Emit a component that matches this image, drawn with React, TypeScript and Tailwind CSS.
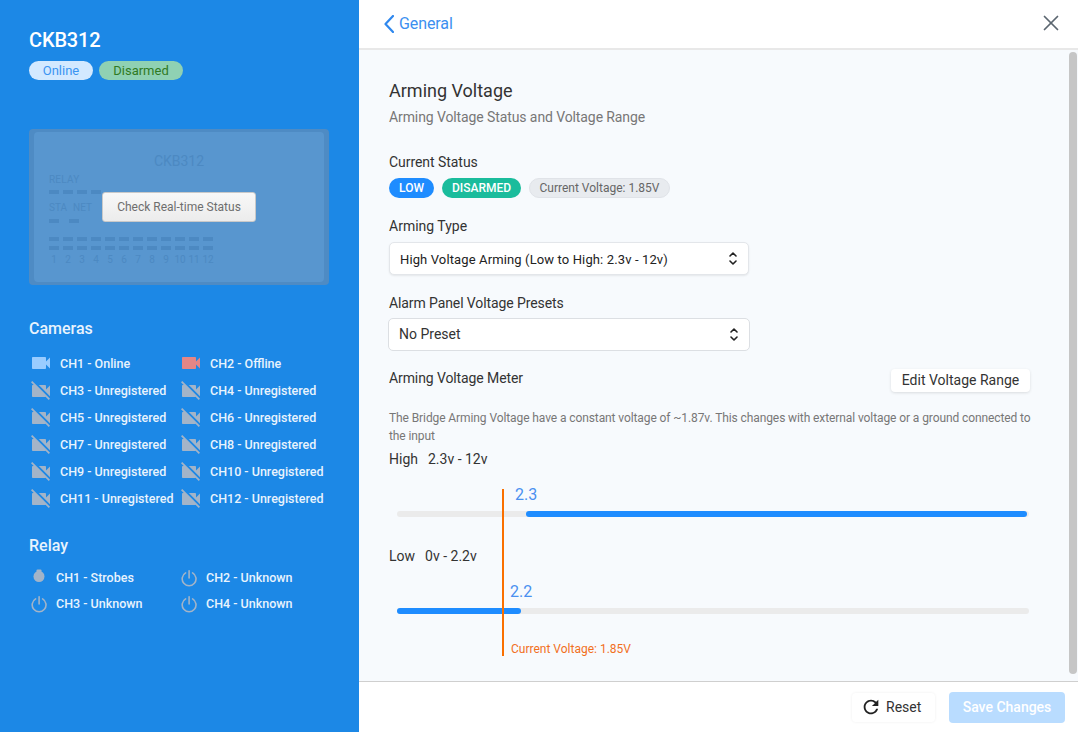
import React from "react";
import { MdRefresh, MdVideocam, MdVideocamOff } from "react-icons/md";
import { X } from "lucide-react";

function CamIcon({ state }: { state: "on" | "off" | "none" }) {
  if (state === "on") return <MdVideocam size={24} color="#99ccff" className="shrink-0 -mt-[3px]" />;
  if (state === "off") return <MdVideocam size={24} color="#e58686" className="shrink-0 -mt-[3px]" />;
  return <MdVideocamOff size={24} color="#a3b4c8" className="shrink-0 -mt-[2px]" />;
}

function PowerIcon() {
  return (
    <svg width="18" height="18" viewBox="0 0 18 18" fill="none" stroke="#a3b4c8" strokeWidth="1.6" strokeLinecap="round" className="shrink-0">
      <path d="M6.6 3.9 A6.9 6.9 0 1 0 13.6 3.9" />
      <path d="M10.1 1.8 V9" />
    </svg>
  );
}

function BulbIcon() {
  return (
    <svg width="18" height="18" viewBox="0 0 18 18" className="shrink-0">
      <rect x="7.5" y="0.5" width="5" height="5" rx="1" fill="#a3b4c8" />
      <circle cx="10" cy="7.5" r="5.5" fill="#a3b4c8" />
    </svg>
  );
}

function UpDown() {
  return (
    <svg width="8" height="15" viewBox="0 0 8 15" fill="none" stroke="#222" strokeWidth="1.6" strokeLinecap="round" strokeLinejoin="round" className="shrink-0">
      <path d="M1 5 L4 2 L7 5" />
      <path d="M1 10 L4 13 L7 10" />
    </svg>
  );
}

const cams: [string, "on" | "off" | "none"][] = [
  ["CH1 - Online", "on"],
  ["CH2 - Offline", "off"],
  ["CH3 - Unregistered", "none"],
  ["CH4 - Unregistered", "none"],
  ["CH5 - Unregistered", "none"],
  ["CH6 - Unregistered", "none"],
  ["CH7 - Unregistered", "none"],
  ["CH8 - Unregistered", "none"],
  ["CH9 - Unregistered", "none"],
  ["CH10 - Unregistered", "none"],
  ["CH11 - Unregistered", "none"],
  ["CH12 - Unregistered", "none"],
];

const relays = ["CH1 - Strobes", "CH2 - Unknown", "CH3 - Unknown", "CH4 - Unknown"];

function Dashes({ n }: { n: number }) {
  return (
    <div className="flex gap-1 h-[4px]">
      {Array.from({ length: n }).map((_, i) => (
        <div key={i} className="w-[10px] h-[4px] bg-[#4c89c2]" />
      ))}
    </div>
  );
}

function PanelPreview() {
  return (
    <div className="relative mt-[49px] w-[300px] h-[156px] rounded bg-[#4e8bc4] px-[5px] py-[3px]">
      <div className="h-[150px] rounded-sm bg-[#5896cf] pl-[15px] pt-[21px] text-[#4c89c2]">
        <div className="text-center text-[14px] leading-[16px] pr-[15px]">CKB312</div>
        <div className="mt-[5px] text-[10px] leading-[12px] tracking-[0.2px]">RELAY</div>
        <div className="mt-[4px]"><Dashes n={4} /></div>
        <div className="mt-[8px] flex gap-[6px] text-[10px] leading-[12px]"><span>STA</span><span>NET</span></div>
        <div className="mt-[5px] flex gap-[10px]">
          <div className="w-[10px] h-[4px] bg-[#4c89c2]" />
          <div className="w-[10px] h-[4px] bg-[#4c89c2]" />
        </div>
        <div className="mt-[14px]"><Dashes n={12} /></div>
        <div className="mt-[5px]"><Dashes n={12} /></div>
        <div className="mt-[4px] flex gap-1 text-[10px] leading-[12px]">
          {Array.from({ length: 12 }).map((_, i) => (
            <span key={i} className="w-[10px] text-center whitespace-nowrap flex justify-center">{i + 1}</span>
          ))}
        </div>
      </div>
      <button className="absolute left-[73px] top-[63px] w-[154px] h-[30px] rounded-[3px] bg-gradient-to-b from-[#f8f8f8] to-[#ececec] border border-[#c9c9c9] text-[12px] text-[#6e6e6e]">
        Check Real-time Status
      </button>
    </div>
  );
}

function Select({ label, wide }: { label: string; wide?: boolean }) {
  return (
    <div
      className={
        wide
          ? "mt-[6px] -ml-px w-[362px] h-[33px] rounded-[5px] border border-[#dcdfe3] bg-white flex items-center justify-between pl-[10px] pr-[11px] text-[14px] text-[#333]"
          : "mt-[7px] w-[360px] h-[33px] rounded-[5px] border border-[#e3e6ea] bg-white shadow-[0_1px_2px_rgba(0,0,0,0.08)] flex items-center justify-between pl-[10px] pr-[11px] text-[13px] tracking-[0.125px] text-[#222]"
      }
    >
      <span className={wide ? "" : "pt-[2px]"}>{label}</span>
      <UpDown />
    </div>
  );
}

export default function App() {
  return (
    <div className="flex w-[1078px] h-[732px] overflow-hidden bg-white font-['Roboto',sans-serif]">
      <aside className="w-[359px] shrink-0 bg-[#1c88e6] pl-[29px] pt-[29px] text-white">
        <h1 className="text-[20px] leading-[23px] font-medium tracking-[-0.15px]">CKB312</h1>
        <div className="mt-[9px] flex gap-[6px]">
          <span className="w-[64px] h-[19px] rounded-full bg-[#d3e9ff] text-[#3b95f2] text-[13px] leading-[19px] text-center">Online</span>
          <span className="w-[84px] h-[19px] rounded-full bg-[#8fd1b3] text-[#2f7a23] text-[13px] leading-[19px] text-center">Disarmed</span>
        </div>
        <PanelPreview />
        <h2 className="mt-[34px] text-[16px] leading-[19px] font-medium text-[#e8f3fd]">Cameras</h2>
        <div className="mt-[13px] grid grid-cols-[150px_150px] auto-rows-[27px]">
          {cams.map(([name, state]) => (
            <div key={name} className="flex items-center gap-[7px] h-[27px] whitespace-nowrap text-[12.5px] font-medium text-[#e8f3fd]">
              <CamIcon state={state} />
              <span>{name}</span>
            </div>
          ))}
        </div>
        <h2 className="mt-[23px] text-[16px] leading-[19px] font-medium text-[#e8f3fd]">Relay</h2>
        <div className="mt-[10px] grid grid-cols-[150px_150px] auto-rows-[26px]">
          {relays.map((name, i) => (
            <div key={name} className="flex items-center gap-[9px] h-[26px] whitespace-nowrap text-[12.5px] font-medium text-[#e8f3fd]">
              {i === 0 ? <BulbIcon /> : <PowerIcon />}
              <span>{name}</span>
            </div>
          ))}
        </div>
      </aside>

      <main className="flex-1 flex flex-col min-w-0">
        <header className="h-[50px] shrink-0 border-b-2 border-[#e8e8e8] flex items-center justify-between pl-[25px] pr-[14px]">
          <div className="flex items-center gap-[5px] text-[#3b8ff0] text-[16px] tracking-[-0.1px]">
            <svg width="10" height="18" viewBox="0 0 10 18" fill="none" stroke="#2f88ee" strokeWidth="2.2" strokeLinecap="round" strokeLinejoin="round">
              <path d="M9 1 L1.5 9 L9 17" />
            </svg>
            <span>General</span>
          </div>
          <X size={26} strokeWidth={1.6} color="#5b6670" className="-mt-[2px]" />
        </header>

        <div className="relative flex-1 bg-[#f7fafd] pl-[30px] pt-[30px] min-h-0">
          <h2 className="text-[18px] leading-[21px] text-[#333]">Arming Voltage</h2>
          <p className="mt-[8px] text-[14px] leading-[17px] tracking-[-0.1px] text-[#777]">Arming Voltage Status and Voltage Range</p>

          <div className="mt-[28px] text-[14px] leading-[17px] tracking-[-0.05px] text-[#333]">Current Status</div>
          <div className="mt-[7px] flex gap-[8px]">
            <span className="w-[45px] h-[20px] rounded-full bg-[#1e8cff] text-white text-[12px] font-medium leading-[20px] text-center">LOW</span>
            <span className="w-[79px] h-[20px] rounded-full bg-[#1abc9c] text-white text-[12px] font-medium leading-[20px] text-center">DISARMED</span>
            <span className="w-[141px] h-[20px] rounded-full bg-[#e8ebef] border border-[#e0e3e8] text-[#666] text-[12px] leading-[18px] text-center">Current Voltage: 1.85V</span>
          </div>

          <div className="mt-[20px] text-[14px] leading-[17px] text-[#333]">Arming Type</div>
          <Select label="High Voltage Arming (Low to High: 2.3v - 12v)" />

          <div className="mt-[20px] text-[14px] leading-[17px] tracking-[-0.1px] text-[#333]">Alarm Panel Voltage Presets</div>
          <Select label="No Preset" wide />

          <div className="mt-[18px] w-[641px] h-[23px] flex items-center justify-between">
            <span className="text-[14px] tracking-[-0.1px] text-[#333] -mt-[5px]">Arming Voltage Meter</span>
            <button className="w-[139px] h-[23px] rounded-[4px] bg-white shadow-[0_1px_3px_rgba(0,0,0,0.12)] text-[14px] text-[#333]">Edit Voltage Range</button>
          </div>

          <p className="mt-[17px] w-[650px] text-[12px] leading-[18px] tracking-[-0.095px] text-[#777]">
            The Bridge Arming Voltage have a constant voltage of ~1.87v. This changes with external voltage or a ground connected to the input
          </p>

          <div className="mt-[6px] text-[14px] leading-[17px] text-[#333]">High<span className="ml-[10px]">2.3v - 12v</span></div>
          <div className="mt-[17px] ml-[126px] text-[16px] leading-[19px] text-[#4a90f0]">2.3</div>
          <div className="mt-[7px] ml-[8px] w-[632px] h-[6px] rounded-full bg-[#ebebeb] pl-[129px] pr-[2px]">
            <div className="h-[6px] rounded-full bg-[#1e8cff]" />
          </div>

          <div className="mt-[31px] text-[14px] leading-[17px] text-[#333]">Low<span className="ml-[10px]">0v - 2.2v</span></div>
          <div className="mt-[17px] ml-[121px] text-[16px] leading-[19px] text-[#4a90f0]">2.2</div>
          <div className="mt-[7px] ml-[8px] w-[632px] h-[6px] rounded-full bg-[#ebebeb]">
            <div className="h-[6px] w-[124px] rounded-full bg-[#1e8cff]" />
          </div>
          <div className="mt-[28px] ml-[122px] text-[12px] leading-[14px] text-[#f2701d]">Current Voltage: 1.85V</div>

          <div className="absolute left-[143px] top-[439px] w-[2px] h-[167px] bg-[#fa7000]" />
          <div className="absolute right-[1px] top-[2px] w-[8px] h-[622px] rounded-full bg-[#c6c6c6]" />
        </div>

        <footer className="h-[51px] shrink-0 border-t border-[#cfcfcf] flex items-center justify-end gap-[14px] pr-[13px]">
          <button className="w-[83px] h-[29px] rounded-[4px] bg-white shadow-[0_0_3px_rgba(0,0,0,0.07)] flex items-center justify-start pl-[8px] gap-[4px] text-[14px] text-[#333] -ml-[2px]">
            <MdRefresh size={22} color="#222" />
            Reset
          </button>
          <button className="w-[116px] h-[31px] rounded-[4px] bg-[#b9dcff] text-white text-[14px] font-medium">Save Changes</button>
        </footer>
      </main>
    </div>
  );
}
